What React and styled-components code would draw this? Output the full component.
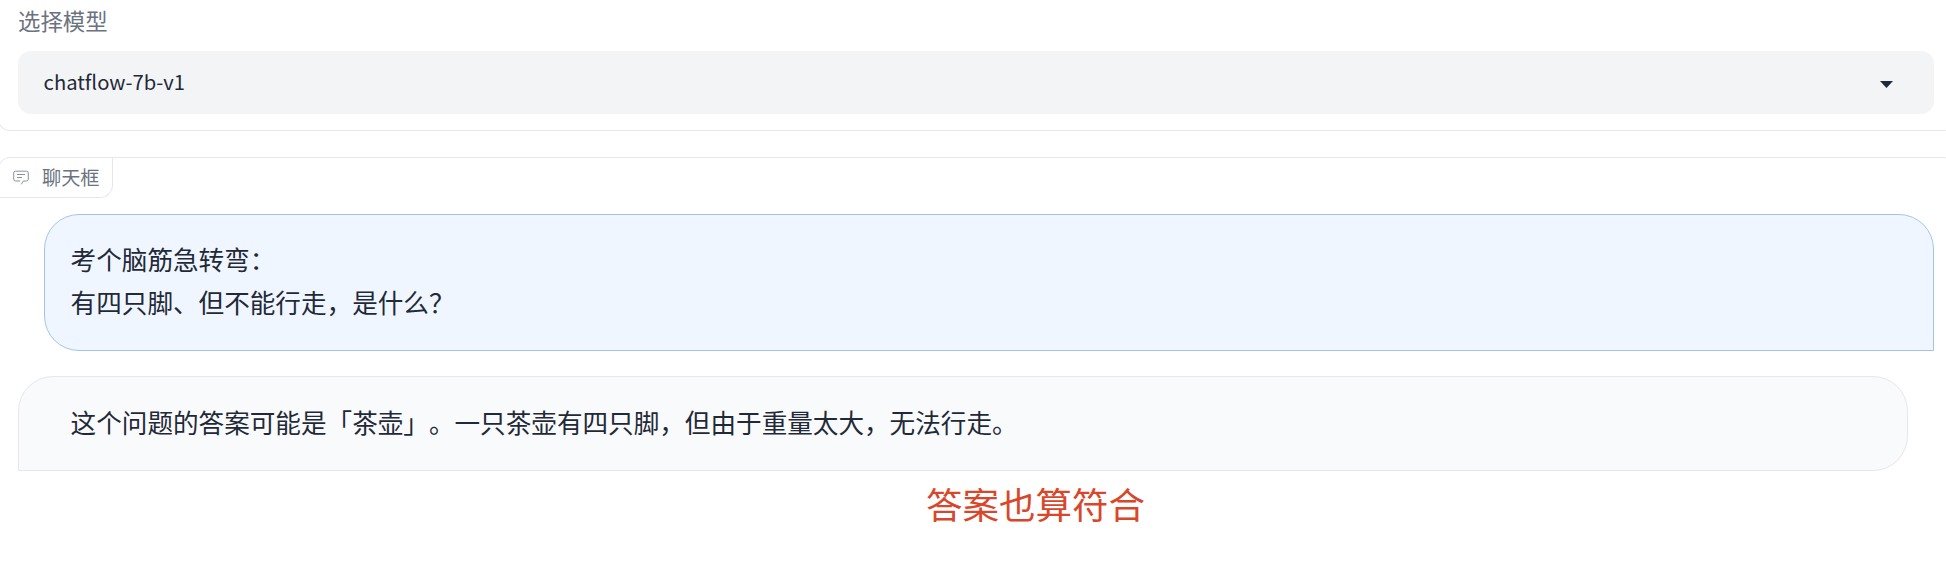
import React from "react";
import styled, { createGlobalStyle, css } from "styled-components";

const GlobalStyle = createGlobalStyle`
  *, *::before, *::after { box-sizing: border-box; }
  body {
    margin: 0;
    background: #fff;
    overflow: hidden;
    font-family: "Noto Sans CJK SC", "Noto Sans", sans-serif;
    text-spacing-trim: space-all;
    color: #1f2937;
  }
`;

const Page = styled.main`
  display: flex;
  flex-direction: column;
  gap: 26px;
  height: 572px;
  overflow: hidden;
`;

const Panel = styled.section`
  display: flex;
  flex-direction: column;
  flex: none;
  margin: 0 -10px 0 -2px;
  border: 1px solid #e5e7eb;
  border-radius: 12px;
  overflow: hidden;
`;

const ModelPanel = styled(Panel)`
  height: 131px;
  padding: 0 21px 16px 19px;
  border-top: 0;
  border-top-left-radius: 0;
  border-top-right-radius: 0;
`;

const FieldLabel = styled.label`
  height: 51px;
  padding-top: 5px;
  font-size: 22.4px;
  line-height: 30px;
  color: #6b7280;
`;

const Select = styled.div`
  display: flex;
  align-items: center;
  justify-content: space-between;
  height: 63px;
  padding: 0 41px 0 25.6px;
  border-radius: 13px;
  background: #f3f4f6;
  font-size: 20.2px;
  line-height: 32px;
`;

const SelectValue = styled.span`
  padding-bottom: 1px;
`;

const Caret = styled.svg`
  width: 13px;
  height: 7px;
  margin-top: 4px;
  fill: #1f2937;
`;

const ChatPanel = styled(Panel)`
  height: 460px;
`;

const ChatLabel = styled.div`
  display: flex;
  align-items: center;
  align-self: flex-start;
  gap: 13px;
  height: 40px;
  padding: 0 12px 1px 14px;
  border: 1px solid #e5e7eb;
  border-top: 0;
  border-left: 0;
  border-bottom-right-radius: 13px;
  font-size: 19.2px;
  line-height: 28px;
  color: #6b7280;
`;

const ChatIcon = styled.svg`
  width: 16px;
  height: 16px;
  margin-top: 2px;
  fill: none;
  stroke: #8b919c;
  stroke-width: 1;
`;

const Messages = styled.div`
  display: flex;
  flex-direction: column;
  gap: 25px;
  padding: 16px 21px 0 19px;
`;

const Bubble = styled.div`
  border: 1px solid;
  border-radius: 35px;
  font-size: 25.6px;
  line-height: 42.3px;
  ${({ $from }) =>
    $from === "user"
      ? css`
          height: 137px;
          margin-left: 26px;
          padding: 23.4px 25.6px;
          border-color: #a5c3e8;
          border-bottom-right-radius: 0;
          background: #eff6ff;
        `
      : css`
          height: 95px;
          margin-right: 26px;
          padding: 24px 25.6px 24px 51.6px;
          border-color: #e5e7eb;
          border-bottom-left-radius: 0;
          background: #f9fafb;
        `}
`;

const Line = styled.p`
  margin: 0;
  white-space: nowrap;
`;

const Annotation = styled.p`
  margin: -18px 0 0 908px;
  font-size: 36.5px;
  line-height: 52px;
  color: #d9472b;
`;

export default function App() {
  return (
    <>
      <GlobalStyle />
      <Page>
        <ModelPanel>
          <FieldLabel>选择模型</FieldLabel>
          <Select>
            <SelectValue>chatflow-7b-v1</SelectValue>
            <Caret viewBox="0 0 13 7">
              <path d="M0 0h13L6.5 7z" />
            </Caret>
          </Select>
        </ModelPanel>
        <ChatPanel>
          <ChatLabel>
            <ChatIcon viewBox="0 0 16 16">
              <path d="M8.3 14.3 10.3 11h3.2a1.8 1.8 0 0 0 1.8-1.8V3a1.8 1.8 0 0 0-1.8-1.8h-11A1.8 1.8 0 0 0 .7 3v6.2a1.8 1.8 0 0 0 1.8 1.8h4.7M4 4.5h8M4 7.5h5" />
            </ChatIcon>
            聊天框
          </ChatLabel>
          <Messages>
            <Bubble $from="user">
              <Line>考个脑筋急转弯：</Line>
              <Line>有四只脚、但不能行走，是什么？</Line>
            </Bubble>
            <Bubble $from="bot">
              <Line>这个问题的答案可能是「茶壶」。一只茶壶有四只脚，但由于重量太大，无法行走。</Line>
            </Bubble>
            <Annotation>答案也算符合</Annotation>
          </Messages>
        </ChatPanel>
      </Page>
    </>
  );
}
